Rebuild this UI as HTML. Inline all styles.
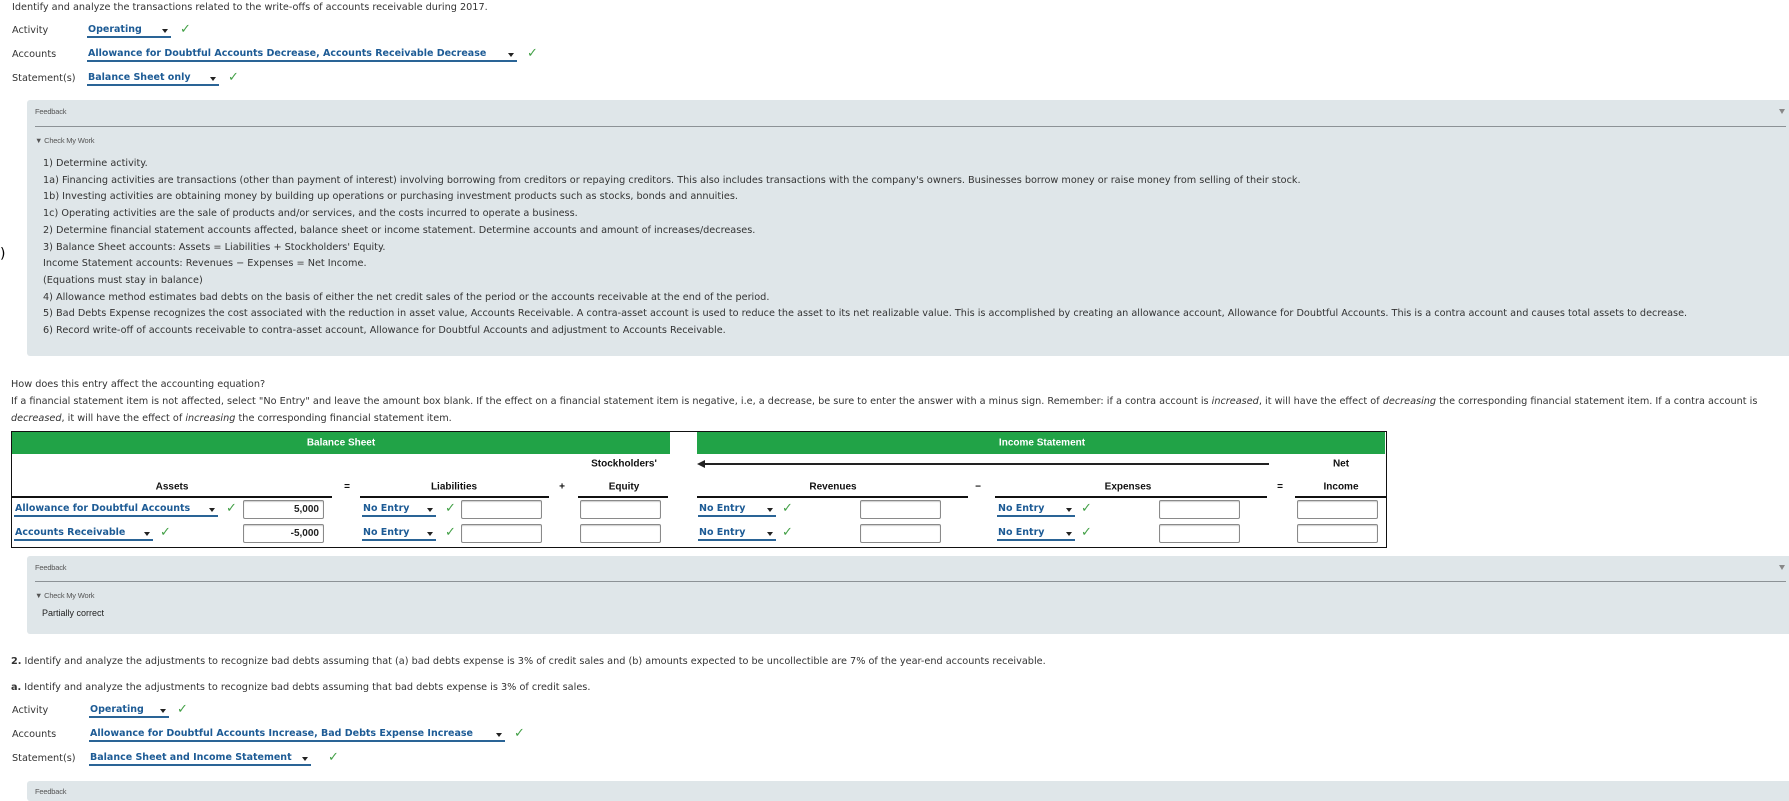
<!DOCTYPE html>
<html><head><meta charset="utf-8"><style>
*{margin:0;padding:0;box-sizing:border-box}
body{width:1789px;height:794px;overflow:hidden;background:#fff;position:relative;font-family:"DejaVu Sans",Verdana,sans-serif;font-size:9.7px;color:#333}
.a{position:absolute;white-space:nowrap}
.t{line-height:12px;transform:translateY(-6px)}
.sel{position:absolute;height:14px;border-bottom:2px solid #2a6496;color:#1d5b95;font-weight:bold;font-size:9.5px;line-height:12px;padding-left:1px;white-space:nowrap;transform:translateY(-7px)}
.sel:after{content:"";position:absolute;right:3px;top:5px;border-left:3px solid transparent;border-right:3px solid transparent;border-top:4px solid #222}
.ck{position:absolute;color:#43a047;font-size:13px;font-weight:bold;line-height:12px;transform:translateY(-7px)}
.panel{position:absolute;left:27px;right:0;background:#dfe6e9;border-radius:3px 0 0 3px}
.fb{position:absolute;font-family:"Liberation Sans",sans-serif;font-size:7.5px;color:#555;letter-spacing:-0.2px}
.line{position:absolute;height:1px;background:#8c9296}
.tri{position:absolute;border-left:3px solid transparent;border-right:3px solid transparent;border-top:5px solid #888}
.inp{position:absolute;width:81px;height:19px;border:1px solid #8a8a8a;border-radius:2px;background:#fff;box-shadow:inset 0 1px 1px #ccc;font-size:10px;font-weight:bold;color:#222;text-align:right;padding-right:4px;line-height:18px;font-family:"Liberation Sans",sans-serif}
.h{position:absolute;font-family:"Liberation Sans",sans-serif;font-weight:bold;font-size:10px;color:#111;transform:translate(-50%,-50%);white-space:nowrap}
.ul{position:absolute;height:2px;background:#111;top:496px}
.fl{line-height:16.7px}
</style></head><body>

<div class="a t" style="left:12px;top:8px">Identify and analyze the transactions related to the write-offs of accounts receivable during 2017.</div>
<div class="a t" style="left:12px;top:31px">Activity</div>
<div class="sel" style="left:87px;top:31px;width:84px">Operating</div><div class="ck" style="left:180px;top:31px">✓</div>
<div class="a t" style="left:12px;top:55px">Accounts</div>
<div class="sel" style="left:87px;top:55px;width:430px">Allowance for Doubtful Accounts Decrease, Accounts Receivable Decrease</div><div class="ck" style="left:527px;top:55px">✓</div>
<div class="a t" style="left:12px;top:79px">Statement(s)</div>
<div class="sel" style="left:87px;top:79px;width:132px">Balance Sheet only</div><div class="ck" style="left:228px;top:79px">✓</div>

<div class="a" style="left:0;top:246px;font-size:14px;line-height:16px;color:#000">)</div>

<div class="panel" style="top:100px;height:256px"></div>
<div class="fb" style="left:35px;top:107px">Feedback</div>
<div class="tri" style="left:1779px;top:109px"></div>
<div class="line" style="left:35px;right:3px;top:126px"></div>
<div class="fb" style="left:35px;top:136px">▼ Check My Work</div>
<div class="a fl" style="left:43px;top:156px">
1) Determine activity.<br>
1a) Financing activities are transactions (other than payment of interest) involving borrowing from creditors or repaying creditors. This also includes transactions with the company's owners. Businesses borrow money or raise money from selling of their stock.<br>
1b) Investing activities are obtaining money by building up operations or purchasing investment products such as stocks, bonds and annuities.<br>
1c) Operating activities are the sale of products and/or services, and the costs incurred to operate a business.<br>
2) Determine financial statement accounts affected, balance sheet or income statement. Determine accounts and amount of increases/decreases.<br>
3) Balance Sheet accounts: Assets = Liabilities + Stockholders' Equity.<br>
Income Statement accounts: Revenues − Expenses = Net Income.<br>
(Equations must stay in balance)<br>
4) Allowance method estimates bad debts on the basis of either the net credit sales of the period or the accounts receivable at the end of the period.<br>
5) Bad Debts Expense recognizes the cost associated with the reduction in asset value, Accounts Receivable. A contra-asset account is used to reduce the asset to its net realizable value. This is accomplished by creating an allowance account, Allowance for Doubtful Accounts. This is a contra account and causes total assets to decrease.<br>
6) Record write-off of accounts receivable to contra-asset account, Allowance for Doubtful Accounts and adjustment to Accounts Receivable.
</div>

<div class="a t" style="left:11px;top:385px">How does this entry affect the accounting equation?</div>
<div class="a t" style="left:11px;top:402px">If a financial statement item is not affected, select "No Entry" and leave the amount box blank. If the effect on a financial statement item is negative, i.e, a decrease, be sure to enter the answer with a minus sign. Remember: if a contra account is <i>increased</i>, it will have the effect of <i>decreasing</i> the corresponding financial statement item. If a contra account is</div>
<div class="a t" style="left:11px;top:419px"><i>decreased</i>, it will have the effect of <i>increasing</i> the corresponding financial statement item.</div>

<!-- table -->
<div class="a" style="left:11px;top:431px;width:1376px;height:117px;border:1.5px solid #111"></div>
<div class="a" style="left:12px;top:432px;width:658px;height:22px;background:#21a347"></div>
<div class="a" style="left:697px;top:432px;width:688px;height:22px;background:#21a347"></div>
<div class="h" style="left:341px;top:443px;color:#fff">Balance Sheet</div>
<div class="h" style="left:1042px;top:443px;color:#fff">Income Statement</div>
<div class="h" style="left:624px;top:464px">Stockholders'</div>
<div class="h" style="left:1341px;top:464px">Net</div>
<div class="a" style="left:703px;top:463px;width:566px;height:2px;background:#222"></div>
<div class="a" style="left:697px;top:460px;border-top:4px solid transparent;border-bottom:4px solid transparent;border-right:8px solid #222"></div>
<div class="h" style="left:172px;top:487px">Assets</div>
<div class="h" style="left:347px;top:487px">=</div>
<div class="h" style="left:454px;top:487px">Liabilities</div>
<div class="h" style="left:562px;top:487px">+</div>
<div class="h" style="left:624px;top:487px">Equity</div>
<div class="h" style="left:833px;top:487px">Revenues</div>
<div class="h" style="left:978px;top:487px">−</div>
<div class="h" style="left:1128px;top:487px">Expenses</div>
<div class="h" style="left:1280px;top:487px">=</div>
<div class="h" style="left:1341px;top:487px">Income</div>
<div class="ul" style="left:11px;width:321px"></div>
<div class="ul" style="left:360px;width:189px"></div>
<div class="ul" style="left:578px;width:90px"></div>
<div class="ul" style="left:697px;width:271px"></div>
<div class="ul" style="left:995px;width:272px"></div>
<div class="ul" style="left:1295px;width:91px"></div>

<div class="sel" style="left:14px;top:510px;width:204px">Allowance for Doubtful Accounts</div><div class="ck" style="left:226px;top:510px">✓</div>
<div class="inp" style="left:243px;top:500px">5,000</div>
<div class="sel" style="left:362px;top:510px;width:74px">No Entry</div><div class="ck" style="left:445px;top:510px">✓</div>
<div class="inp" style="left:461px;top:500px"></div>
<div class="inp" style="left:580px;top:500px"></div>
<div class="sel" style="left:698px;top:510px;width:78px">No Entry</div><div class="ck" style="left:782px;top:510px">✓</div>
<div class="inp" style="left:860px;top:500px"></div>
<div class="sel" style="left:997px;top:510px;width:78px">No Entry</div><div class="ck" style="left:1081px;top:510px">✓</div>
<div class="inp" style="left:1159px;top:500px"></div>
<div class="inp" style="left:1297px;top:500px"></div>

<div class="sel" style="left:14px;top:534px;width:139px">Accounts Receivable</div><div class="ck" style="left:160px;top:534px">✓</div>
<div class="inp" style="left:243px;top:524px">-5,000</div>
<div class="sel" style="left:362px;top:534px;width:74px">No Entry</div><div class="ck" style="left:445px;top:534px">✓</div>
<div class="inp" style="left:461px;top:524px"></div>
<div class="inp" style="left:580px;top:524px"></div>
<div class="sel" style="left:698px;top:534px;width:78px">No Entry</div><div class="ck" style="left:782px;top:534px">✓</div>
<div class="inp" style="left:860px;top:524px"></div>
<div class="sel" style="left:997px;top:534px;width:78px">No Entry</div><div class="ck" style="left:1081px;top:534px">✓</div>
<div class="inp" style="left:1159px;top:524px"></div>
<div class="inp" style="left:1297px;top:524px"></div>

<div class="panel" style="top:556px;height:78px"></div>
<div class="fb" style="left:35px;top:563px">Feedback</div>
<div class="tri" style="left:1779px;top:565px"></div>
<div class="line" style="left:35px;right:3px;top:581px"></div>
<div class="fb" style="left:35px;top:591px">▼ Check My Work</div>
<div class="a" style="left:42px;top:608px;font-family:'Liberation Sans',sans-serif;font-size:9px;color:#222">Partially correct</div>

<div class="a t" style="left:11px;top:662px"><b>2.</b> Identify and analyze the adjustments to recognize bad debts assuming that (a) bad debts expense is 3% of credit sales and (b) amounts expected to be uncollectible are 7% of the year-end accounts receivable.</div>
<div class="a t" style="left:11px;top:688px"><b>a.</b> Identify and analyze the adjustments to recognize bad debts assuming that bad debts expense is 3% of credit sales.</div>
<div class="a t" style="left:12px;top:711px">Activity</div>
<div class="sel" style="left:89px;top:711px;width:80px">Operating</div><div class="ck" style="left:177px;top:711px">✓</div>
<div class="a t" style="left:12px;top:735px">Accounts</div>
<div class="sel" style="left:89px;top:735px;width:416px">Allowance for Doubtful Accounts Increase, Bad Debts Expense Increase</div><div class="ck" style="left:514px;top:735px">✓</div>
<div class="a t" style="left:12px;top:759px">Statement(s)</div>
<div class="sel" style="left:89px;top:759px;width:222px">Balance Sheet and Income Statement</div><div class="ck" style="left:328px;top:759px">✓</div>

<div class="panel" style="top:781px;height:20px"></div>
<div class="fb" style="left:35px;top:787px">Feedback</div>
</body></html>
